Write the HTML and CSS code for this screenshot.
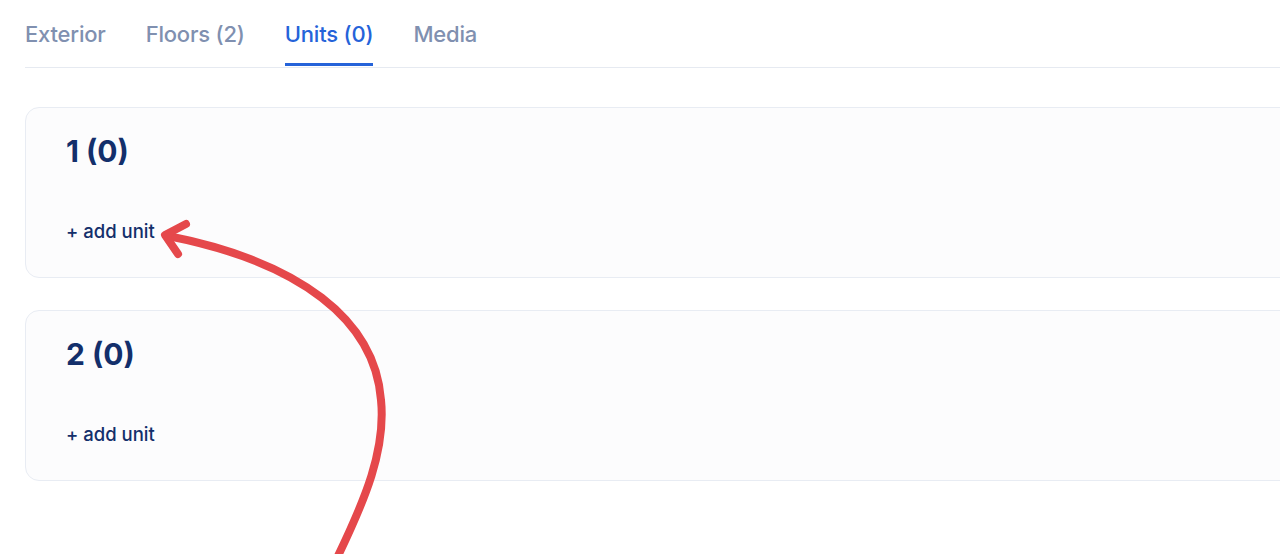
FILE: index.html
```html
<!DOCTYPE html>
<html>
<head>
<meta charset="utf-8">
<link rel="stylesheet" href="styles.css">
</head>
<body>
<div class="page">
  <nav class="tabs">
    <div class="tab">Exterior</div>
    <div class="tab">Floors (2)</div>
    <div class="tab active">Units (0)</div>
    <div class="tab">Media</div>
  </nav>
  <div class="floors">
    <section class="card">
      <h2 class="card-title">1 (0)</h2>
      <a class="add-unit">+ add unit</a>
    </section>
    <section class="card">
      <h2 class="card-title">2 (0)</h2>
      <a class="add-unit">+ add unit</a>
    </section>
  </div>
</div>
<svg class="annotation" width="1280" height="554" viewBox="0 0 1280 554">
  <path d="M337 558 C365 500 386 450 381 400 C375 320 300 262 168 236" fill="none" stroke="#e5484b" stroke-width="8" stroke-linecap="round"/>
  <path d="M186 224 L165 235 L178 254" fill="none" stroke="#e5484b" stroke-width="8" stroke-linecap="round" stroke-linejoin="round"/>
</svg>
</body>
</html>
```
FILE: styles.css
```css
* { box-sizing: border-box; }
html, body { margin: 0; padding: 0; background: #ffffff; }
body {
  font-family: Inter, "Noto Sans", sans-serif;
  width: 1280px;
  height: 554px;
  overflow: hidden;
  position: relative;
}
.page {
  padding-left: 25px;
  width: 1320px;
}
.tabs {
  display: flex;
  gap: 40px;
  border-bottom: 1px solid #e6eaf1;
  height: 68px;
  align-items: flex-end;
}
.tab {
  font-size: 22px;
  font-weight: 500;
  letter-spacing: -0.2px;
  color: #8090b0;
  line-height: 30px;
  padding-bottom: 10px;
  height: 47px;
  border-bottom: 3px solid transparent;
  margin-bottom: 1px;
}
.tab.active {
  color: #2563d9;
  border-bottom-color: #2563d9;
}
.floors {
  display: flex;
  flex-direction: column;
  gap: 32px;
  padding-top: 39px;
}
.card {
  height: 171px;
  border: 1.5px solid #e8ecf3;
  border-radius: 14px;
  background: #fcfcfd;
  padding: 25px 40px 0 40px;
  display: flex;
  flex-direction: column;
}
.card-title {
  margin: 0;
  font-size: 30px;
  font-weight: 650;
  line-height: 36px;
  color: #132f6b;
}
.add-unit {
  margin-top: 50px;
  font-size: 18.5px;
  font-weight: 500;
  line-height: 24px;
  color: #132f6b;
}
.annotation {
  position: absolute;
  left: 0;
  top: 0;
  pointer-events: none;
}
```
